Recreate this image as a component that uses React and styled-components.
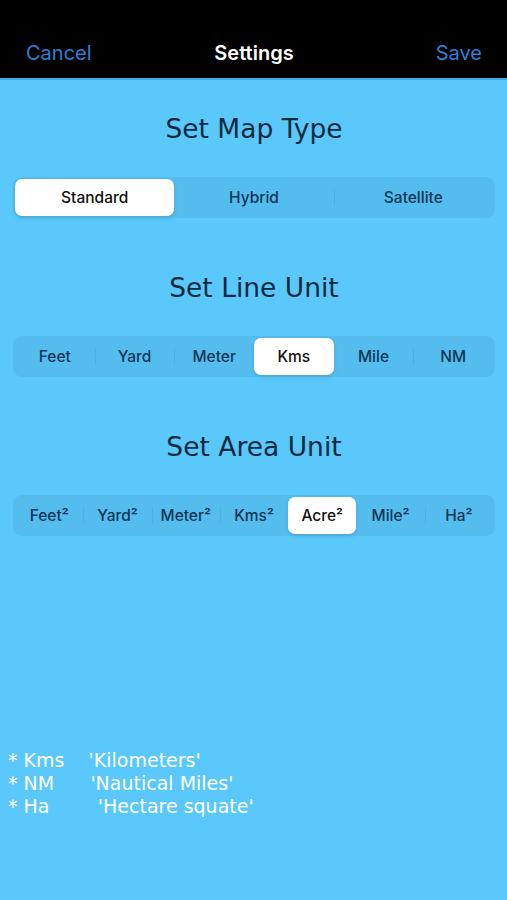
import React, { useState } from 'react';
import styled, { createGlobalStyle } from 'styled-components';

const GlobalStyle = createGlobalStyle`
  html, body {
    margin: 0;
    padding: 0;
    background: #5ac8fa;
  }
  * {
    box-sizing: border-box;
  }
`;

const Page = styled.div`
  width: 507px;
  height: 900px;
  background: #5ac8fa;
  display: flex;
  flex-direction: column;
  overflow: hidden;
`;

const NavBar = styled.div`
  height: 80px;
  background: #000;
  border-bottom: 2px solid #3ea9e8;
  display: grid;
  grid-template-columns: 1fr auto 1fr;
  align-items: center;
  padding: 28px 25px 0 26px;
  font-family: Inter, 'Liberation Sans', sans-serif;
  font-size: 20px;
`;

const NavButton = styled.span`
  color: #2f7fd6;
  justify-self: ${(p) => (p.right ? 'end' : 'start')};
`;

const NavTitle = styled.span`
  color: #fff;
  font-weight: 600;
`;

const Body = styled.div`
  display: flex;
  flex-direction: column;
  padding: 33px 12px 0 13px;
`;

const Heading = styled.h2`
  margin: 0;
  height: 32px;
  line-height: 32px;
  text-align: center;
  font-family: 'DejaVu Sans', Verdana, sans-serif;
  font-weight: normal;
  font-size: 26.5px;
  color: #0d2a40;
`;

const Track = styled.div`
  margin: 32px 0 54px;
  height: 41px;
  padding: 2px;
  border-radius: 9px;
  background: #55bdee;
  display: grid;
  grid-template-columns: repeat(${(p) => p.count}, 1fr);
`;

const Segment = styled.button`
  position: relative;
  border: none;
  margin: 0;
  padding: 0;
  border-radius: 7px;
  background: ${(p) => (p.active ? '#fff' : 'transparent')};
  box-shadow: ${(p) => (p.active ? '0 2px 4px rgba(0,0,0,0.12)' : 'none')};
  color: ${(p) => (p.active ? '#111' : '#0b3556')};
  font-family: Inter, 'Liberation Sans', sans-serif;
  font-weight: 500;
  font-size: 15.5px;
  cursor: pointer;

  &::before {
    content: '';
    position: absolute;
    left: 0;
    top: 10px;
    bottom: 10px;
    width: 1px;
    background: ${(p) => (p.divider ? 'rgba(0,0,0,0.06)' : 'transparent')};
  }
`;

const Notes = styled.pre`
  margin: 159px 0 0 8px;
  font-family: 'DejaVu Sans', Verdana, sans-serif;
  font-size: 19px;
  line-height: 23px;
  color: #fff;
`;

function Segmented({ items, value, onChange, square }) {
  return (
    <Track count={items.length}>
      {items.map((it, i) => (
        <Segment
          key={it}
          active={i === value}
          divider={i > 0 && i !== value && i - 1 !== value}
          onClick={() => onChange(i)}
        >
          {square ? `${it}²` : it}
        </Segment>
      ))}
    </Track>
  );
}

export default function App() {
  const [mapType, setMapType] = useState(0);
  const [lineUnit, setLineUnit] = useState(3);
  const [areaUnit, setAreaUnit] = useState(4);

  return (
    <Page>
      <GlobalStyle />
      <NavBar>
        <NavButton>Cancel</NavButton>
        <NavTitle>Settings</NavTitle>
        <NavButton right>Save</NavButton>
      </NavBar>
      <Body>
        <Heading>Set Map Type</Heading>
        <Segmented
          items={['Standard', 'Hybrid', 'Satellite']}
          value={mapType}
          onChange={setMapType}
        />
        <Heading>Set Line Unit</Heading>
        <Segmented
          items={['Feet', 'Yard', 'Meter', 'Kms', 'Mile', 'NM']}
          value={lineUnit}
          onChange={setLineUnit}
        />
        <Heading>Set Area Unit</Heading>
        <Segmented
          items={['Feet', 'Yard', 'Meter', 'Kms', 'Acre', 'Mile', 'Ha']}
          value={areaUnit}
          onChange={setAreaUnit}
          square
        />
      </Body>
      <Notes>{`* Kms    'Kilometers'
* NM      'Nautical Miles'
* Ha        'Hectare squate'`}</Notes>
    </Page>
  );
}
